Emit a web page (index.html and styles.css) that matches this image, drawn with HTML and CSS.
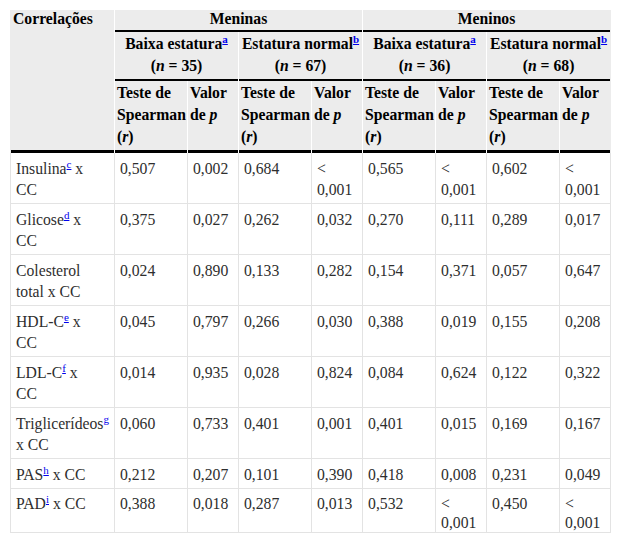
FILE: index.html
```html
<!DOCTYPE html>
<html lang="pt">
<head>
<meta charset="utf-8">
<title>Correlações</title>
<link rel="stylesheet" href="styles.css">
</head>
<body>
<table class="tbl">
  <colgroup>
    <col class="c-lbl">
    <col class="c-r"><col class="c-p">
    <col class="c-r"><col class="c-p">
    <col class="c-r"><col class="c-p">
    <col class="c-r"><col class="c-end">
  </colgroup>
  <thead>
    <tr class="h1">
      <th rowspan="3" class="lbl">Correlações</th>
      <th colspan="4" class="ctr">Meninas</th>
      <th colspan="4" class="ctr">Meninos</th>
    </tr>
    <tr class="h2">
      <th colspan="2" class="ctr">Baixa estatura<sup><a href="#">a</a></sup><br>(<i>n</i> = 35)</th>
      <th colspan="2" class="ctr">Estatura normal<sup><a href="#">b</a></sup><br>(<i>n</i> = 67)</th>
      <th colspan="2" class="ctr">Baixa estatura<sup><a href="#">a</a></sup><br>(<i>n</i> = 36)</th>
      <th colspan="2" class="ctr">Estatura normal<sup><a href="#">b</a></sup><br>(<i>n</i> = 68)</th>
    </tr>
    <tr class="h3">
      <th>Teste de Spearman (<i>r</i>)</th><th>Valor de <i>p</i></th>
      <th>Teste de Spearman (<i>r</i>)</th><th>Valor de <i>p</i></th>
      <th>Teste de Spearman (<i>r</i>)</th><th>Valor de <i>p</i></th>
      <th>Teste de Spearman (<i>r</i>)</th><th>Valor de <i>p</i></th>
    </tr>
  </thead>
  <tbody>
    <tr><td>Insulina<sup><a href="#">c</a></sup> x<br>CC</td><td>0,507</td><td>0,002</td><td>0,684</td><td>&lt; 0,001</td><td>0,565</td><td>&lt; 0,001</td><td>0,602</td><td>&lt; 0,001</td></tr>
    <tr><td>Glicose<sup><a href="#">d</a></sup> x<br>CC</td><td>0,375</td><td>0,027</td><td>0,262</td><td>0,032</td><td>0,270</td><td>0,111</td><td>0,289</td><td>0,017</td></tr>
    <tr><td>Colesterol<br>total x CC</td><td>0,024</td><td>0,890</td><td>0,133</td><td>0,282</td><td>0,154</td><td>0,371</td><td>0,057</td><td>0,647</td></tr>
    <tr><td>HDL-C<sup><a href="#">e</a></sup> x<br>CC</td><td>0,045</td><td>0,797</td><td>0,266</td><td>0,030</td><td>0,388</td><td>0,019</td><td>0,155</td><td>0,208</td></tr>
    <tr><td>LDL-C<sup><a href="#">f</a></sup> x<br>CC</td><td>0,014</td><td>0,935</td><td>0,028</td><td>0,824</td><td>0,084</td><td>0,624</td><td>0,122</td><td>0,322</td></tr>
    <tr><td>Triglicerídeos<sup><a href="#">g</a></sup><br>x CC</td><td>0,060</td><td>0,733</td><td>0,401</td><td>0,001</td><td>0,401</td><td>0,015</td><td>0,169</td><td>0,167</td></tr>
    <tr><td>PAS<sup><a href="#">h</a></sup> x CC</td><td>0,212</td><td>0,207</td><td>0,101</td><td>0,390</td><td>0,418</td><td>0,008</td><td>0,231</td><td>0,049</td></tr>
    <tr class="last"><td>PAD<sup><a href="#">i</a></sup> x CC</td><td>0,388</td><td>0,018</td><td>0,287</td><td>0,013</td><td>0,532</td><td>&lt; 0,001</td><td>0,450</td><td>&lt; 0,001</td></tr>
  </tbody>
</table>
</body>
</html>
```

FILE: styles.css
```css
html, body {
  margin: 0;
  padding: 0;
  background: #fff;
}

body {
  font-family: "Liberation Serif", "Times New Roman", serif;
  font-size: 15.7px;
  color: #2e2e2e;
}

.tbl {
  margin: 10px 0 0 10px;
  width: 601px;
  table-layout: fixed;
  border-collapse: separate;
  border-spacing: 0;
}

.c-lbl { width: 104px; }
.c-r { width: 73px; }
.c-p { width: 51px; }
.c-end { width: 52px; }

.tbl th {
  font-weight: bold;
  color: #000;
  text-align: left;
  vertical-align: top;
  padding: 0 2px 4px 2px;
  line-height: 22px;
  border-left: 1px solid #fff;
  background: linear-gradient(#000, #000) left bottom / 100% 2px no-repeat, #ececec;
}

.tbl th.lbl {
  border-left-color: #ececec;
  line-height: 18px;
  padding: 0 2px 6px 2px;
  background: linear-gradient(#000, #000) left bottom / 100% 3px no-repeat, #ececec;
}

.tbl th:last-child {
  border-right: 1px solid #ececec;
}

.tbl th.ctr {
  text-align: center;
}

.h1 th {
  line-height: 18px;
  padding-top: 0;
  padding-bottom: 4px;
}

.h2 th {
  padding-top: 1px;
  padding-bottom: 4px;
}

.h3 th {
  padding-top: 1px;
  padding-bottom: 5px;
  background: linear-gradient(#000, #000) left bottom / 100% 3px no-repeat, #ececec;
}

.tbl td {
  vertical-align: top;
  line-height: 21px;
  padding: 5px 5px 3px 5px;
  border-left: 1px solid #e3e3e3;
  border-bottom: 1px solid #e3e3e3;
}

.tbl td:last-child {
  border-right: 1px solid #e3e3e3;
}

.tbl tr.last td {
  line-height: 19px;
  padding-top: 5px;
  padding-bottom: 0;
}

sup {
  font-size: 0.7em;
  line-height: 0;
  vertical-align: super;
}

sup a {
  color: #0000ee;
  text-decoration: underline;
}

th sup a {
  font-weight: bold;
}
```
